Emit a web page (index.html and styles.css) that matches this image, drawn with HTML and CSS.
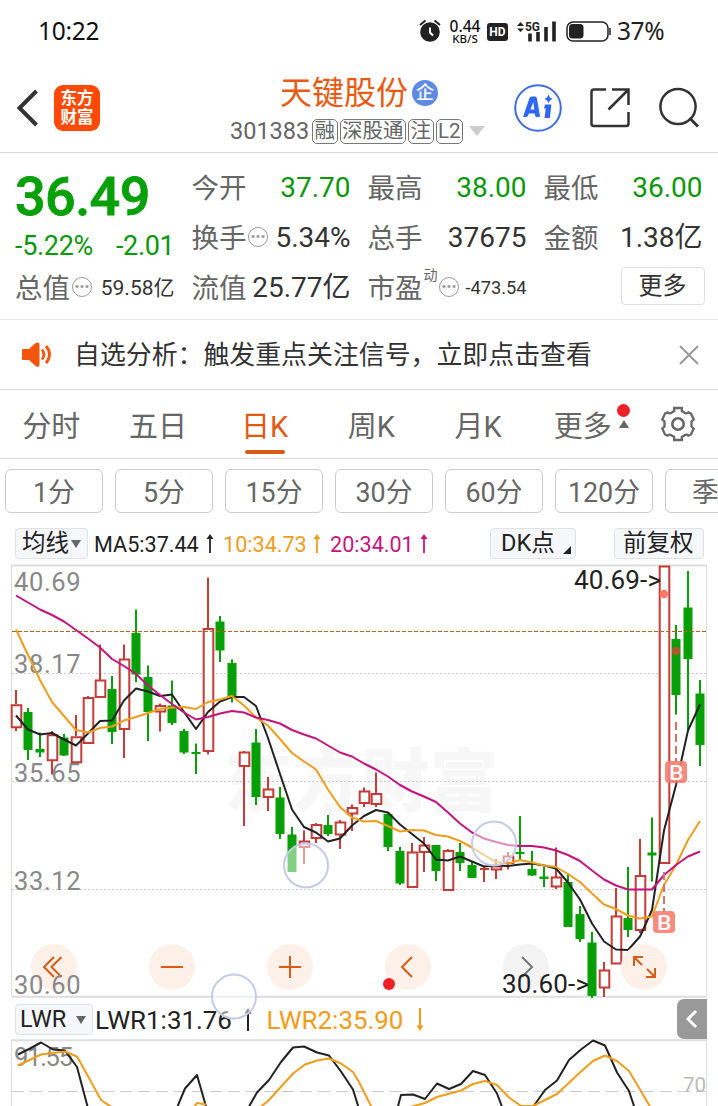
FILE: index.html
```html
<!DOCTYPE html>
<html lang="zh-CN">
<head>
<meta charset="utf-8">
<title>天键股份 301383</title>
<link rel="stylesheet" href="styles.css">
</head>
<body>
<div class="app">
  <div class="status">
    <span class="clock">10:22</span>
    <div class="status-right">
      <svg class="alarm" width="22" height="24" viewBox="0 0 22 24"><circle cx="11" cy="13" r="9.800" fill="#222"/><path d="M1 6 6.500 1.500M15.500 1.500 21 6" stroke="#222" stroke-width="2"/><path d="M11 8.500v5l3 3" fill="none" stroke="#fff" stroke-width="2"/></svg>
      <div class="speed"><b>0.44</b><b class="unit">KB/S</b></div>
      <span class="hd">HD</span>
      <svg class="signal" width="40" height="24" viewBox="0 0 40 24"><path d="M0 6 3.500 2 7 6zM0 8.500h7L3.500 12z" fill="#222"/><text x="8" y="10.500" class="fiveg" textLength="15" lengthAdjust="spacingAndGlyphs">5G</text><path d="M13 13.500v8M21 12v9.500M29 7v14.500M37 1.500v20" stroke="#222" stroke-width="3.600"/></svg>
      <svg class="battery" width="45" height="22" viewBox="0 0 45 22"><rect x="1" y="1" width="41" height="19" rx="6" fill="none" stroke="#222" stroke-width="1.500"/><rect x="3" y="3" width="14.500" height="14.500" rx="3.500" fill="#222"/><path d="M44 7v7" stroke="#222" stroke-width="1.500"/></svg>
      <span class="percent">37%</span>
    </div>
  </div>

  <header class="header">
    <svg class="back" width="24" height="38" viewBox="0 0 24 38"><path d="M21.500 2 4.500 19 21.500 36" fill="none" stroke="#333" stroke-width="4"/></svg>
    <div class="logo"><span>东方</span><span>财富</span></div>
    <div class="title">
      <div class="name"><span>天键股份</span><i class="ent">企</i></div>
      <div class="code"><span class="num">301383</span><i class="tag">融</i><i class="tag">深股通</i><i class="tag">注</i><i class="tag">L2</i><i class="caret"></i></div>
    </div>
    <div class="tools">
      <svg width="48" height="48" viewBox="0 0 48 48"><circle cx="24" cy="24" r="22.800" fill="none" stroke="#3f6be8" stroke-width="2"/><path d="M9 33 15.500 14Q16 12.500 17.500 12.500H21Q22.500 12.500 22.800 14L26 32Q26 33 25 33H22.500Q21.500 33 21.200 32L20.800 29.500H15L13.800 32Q13.300 33 12.300 33ZM16.500 25.500H20.300L19.300 18Z" fill="#2f67f5" fill-rule="evenodd"/><path d="M31 20.500H37Q37.500 20.500 37.300 21.500L35.800 34H30.500L31.700 24.500H30Z" fill="#2f67f5"/><path d="M34.500 10.500 36 13.500 38.500 15 36 16.500 34.500 19 33 16.500 30.500 15 33 13.500z" fill="#2f67f5"/></svg>
      <svg class="share" width="40" height="40" viewBox="0 0 40 40"><path d="M16 1.500H4Q1.500 1.500 1.500 4V36Q1.500 38 4 38H36Q38.500 38 38.500 36V24M22 1.500H38.500V17M38.500 1.500 18.500 21.500" fill="none" stroke="#333" stroke-width="2.500"/></svg>
      <svg class="search" width="42" height="42" viewBox="0 0 42 42"><circle cx="20" cy="19.500" r="17.600" fill="none" stroke="#333" stroke-width="2.500"/><path d="M31.500 31 40 39.500" stroke="#333" stroke-width="3"/></svg>
    </div>
  </header>

  <section class="quote">
    <div class="lead">
      <strong class="price">36.49</strong>
      <div class="change"><span>-5.22%</span><span>-2.01</span></div>
      <div class="cell"><span class="lbl">总值<i class="more-dot"></i></span><span class="val sm">59.58亿</span></div>
    </div>
    <div class="col">
      <div class="cell"><span class="lbl">今开</span><span class="val green">37.70</span></div>
      <div class="cell"><span class="lbl">换手<i class="more-dot"></i></span><span class="val">5.34%</span></div>
      <div class="cell"><span class="lbl">流值</span><span class="val">25.77亿</span></div>
    </div>
    <div class="col">
      <div class="cell"><span class="lbl">最高</span><span class="val green">38.00</span></div>
      <div class="cell"><span class="lbl">总手</span><span class="val">37675</span></div>
      <div class="cell"><span class="lbl">市盈<sup>动</sup><i class="more-dot"></i></span><span class="val xs">-473.54</span></div>
    </div>
    <div class="col">
      <div class="cell"><span class="lbl">最低</span><span class="val green">36.00</span></div>
      <div class="cell"><span class="lbl">金额</span><span class="val">1.38亿</span></div>
      <div class="cell end"><button class="more-btn">更多</button></div>
    </div>
  </section>

  <div class="notice">
    <svg width="32" height="26" viewBox="0 0 32 26"><path d="M1 7H7L13 1.500Q17.500 -1 17.500 3V22Q17.500 27 13 23.500L7 18H1Q0 18 0 17V8Q0 7 1 7Z" fill="#f4550c"/><path d="M20 7.500Q24 12.500 20 17.500M24 4Q31 12.500 24 21" fill="none" stroke="#f4550c" stroke-width="2.800"/></svg>
    <span class="notice-text">自选分析：触发重点关注信号，立即点击查看</span>
    <svg width="20" height="20" viewBox="0 0 20 20"><path d="M1 1 19 19M19 1 1 19" stroke="#999" stroke-width="2"/></svg>
  </div>

  <nav class="tabs">
    <span class="tab">分时</span><span class="tab">五日</span><span class="tab active">日K</span><span class="tab">周K</span><span class="tab">月K</span><span class="tab last">更多<i class="up"></i><i class="badge"></i></span>
    <svg class="gear" width="36" height="36" viewBox="0 0 36 36"><path d="M14.200 5V2H21.800V5L25 7Q27 8 28.500 6.300L31 7.500 33.700 13.500 31.500 15.500V20.500L33.700 22.500 31 28.500 28.500 29.700Q27 28 25 29L21.800 31V34H14.200V31L11 29Q9 28 7.500 29.700L5 28.500 2.300 22.500 4.500 20.500V15.500L2.300 13.500 5 7.500 7.500 6.300Q9 8 11 7Z" fill="none" stroke="#666" stroke-width="2.300"/><circle cx="18" cy="18" r="5.700" fill="none" stroke="#666" stroke-width="2.600"/></svg>
  </nav>

  <div class="periods">
    <span>1分</span><span>5分</span><span>15分</span><span>30分</span><span>60分</span><span>120分</span><span class="season">季</span>
  </div>

  <div class="averages">
    <span class="chip ma">均线<i class="down"></i></span>
    <span class="avg black">MA5:37.44</span><svg class="arr" width="10" height="20" viewBox="0 0 10 20"><path d="M5 2V19" stroke="#222" stroke-width="1.800"/><path d="M1.500 5 5 0 8.500 5z" fill="#222"/></svg>
    <span class="avg orange">10:34.73</span><svg class="arr" width="10" height="20" viewBox="0 0 10 20"><path d="M5 2V19" stroke="#f39c1c" stroke-width="1.800"/><path d="M1.500 5 5 0 8.500 5z" fill="#f39c1c"/></svg>
    <span class="avg pink">20:34.01</span><svg class="arr" width="10" height="20" viewBox="0 0 10 20"><path d="M5 2V19" stroke="#c7157f" stroke-width="1.800"/><path d="M1.500 5 5 0 8.500 5z" fill="#c7157f"/></svg>
    <span class="chip dk">DK点<i class="corner"></i></span>
    <span class="chip adj">前复权</span>
  </div>

  <div class="chart">
    <svg class="plot" width="718" height="436" viewBox="0 564 718 436">
      <text class="mark" x="224" y="806" textLength="274">东方财富</text>
      <path class="grid" d="M12 673.500H706M12 781.500H706M12 889.500H706"/>
      <path class="frame" d="M11.500 565V997M706.500 565V997"/><path class="frame thick" d="M11 565.500H707M11 996.800H707"/>
      <g class="axis">
        <text x="14" y="591" textLength="66.500">40.69</text><text x="14" y="672.500" textLength="66.500">38.17</text><text x="14" y="781.500" textLength="66.500">35.65</text><text x="14" y="890" textLength="66.500">33.12</text>
      </g>
      <path class="g-wick" d="M28 708V760M40 732.500V757M64 734V756M112 676V744M136 609.500V682M148 665.500V741M172 680.500V725M184 729V754M196 743.500V774M220 616V662M232 659.500V702.500M256 729V805M280 787V839M292 827V872M328 815V836M388 813V851M400 847V885M436 845V881M460 843V871M472 861V878M520 816V860M532 851V876M544 867V887M568 873V927M580 906V942M592 932V998M628 867V937M652 817.500V881.500M676 625V714.500M688 571V730M700 680V766"/>
      <path class="g-body" d="M28 712V750M40 749V752.500M64 737.500V755.500M112 689V732M136 633V674.500M148 677V712M172 705.500V723M184 731V752.500M196 752V754M220 621.500V650.500M232 663V697M256 742.500V797M280 797.500V834M292 834.500V872M328 825V834M388 814V847M400 851V883.500M436 845V871M460 852V863M472 865V878M520 852V854M532 869V875.500M544 876.500V879M568 882V927M580 914V939M592 942.500V996M628 918V930M652 852.500V855.500M676 639V695M688 607.500V659M700 693.500V745"/>
      <path class="r-wick" d="M16 690V704M16 728V731M52 731V735M52 760V774.500M76 715V736M88 696V698M100 644.500V680M124 644.500V659M124 729V758M160 703.500V705M160 712V731.500M208 577.500V628M208 752V754.500M244 751V753M244 766V826M268 777V789M268 797V811M304 830.500V841M304 847V864M316 823V825M316 838V843M340 820V822M340 834V849M352 804.500V808M352 814V831M364 787.500V791M364 803V807M376 772.500V794M376 804V807M412 843V852M424 837V845M424 852V872M448 849V851M484 866V882M496 859V866M496 869V879M508 852V856M508 863V869.500M556 847.500V877M556 887V889M604 962V970M604 987V997M616 888V916M640 839V876M640 930V933"/>
      <path class="r-body" d="M11.700 705.200h9.600v22h-9.600zM47.700 735.200h9.600v25h-9.600zM71.700 737.200h9.600v25h-9.600zM83.700 698h9.600v45h-9.600zM95.700 680.500h9.600v16.500h-9.600zM119.700 659.500h9.600v69.500h-9.600zM155.700 706h9.600v5.500h-9.600zM203.700 629h9.600v122h-9.600zM239.700 752.500h9.600v13.500h-9.600zM263.700 789.500h9.600v7.500h-9.600zM299.700 841.500h9.600v5.500h-9.600zM311.700 825h9.600v13h-9.600zM335.700 822.500h9.600v12h-9.600zM347.700 808h9.600v5.500h-9.600zM359.700 791.500h9.600v11.500h-9.600zM371.700 794h9.600v10h-9.600zM407.700 852.500h9.600v34.500h-9.600zM419.700 845.500h9.600v6.500h-9.600zM443.700 851h9.600v39h-9.600zM480 869h9M491.700 866.500h9.600v3h-9.600zM503.700 856.500h9.600v6.500h-9.600zM551.700 877.500h9.600v9h-9.600zM599.700 970.500h9.600v17h-9.600zM611.700 916.500h9.600v47h-9.600zM635.700 876h9.600v54h-9.600zM659.700 566.500h9.600v296.500h-9.600z"/>
      <path class="limit" d="M12 631.500H706"/>
      <path class="line black" d="M16 715.500 28 729.500 40 734.500 52 733 64 739.500 76 745.500 88 733.500 100 721 112 720.500 124 700.500 136 688.500 148 691.500 160 696 172 694.500 184 712 196 729 208 712 220 701.500 232 697H244L256 706 268 738 280 774 292 809.500 304 827 316 832.500 328 841.500 340 838.500 352 825.500 364 816 376 810 388 812.500 400 824.500 412 834 424 843.500 436 859.500 448 860.500 460 856.500 472 861.500 484 866.500 496 865.500 508 866 520 864.500 532 863.500 544 865.500 556 868.500 568 882.500 580 899.500 592 923.500 604 941.500 616 949.500 628 950 640 936.500 652 910 664 830.500 676 785 688 730.500 700 704.500"/>
      <path class="line orange" d="M16 629.500 28 655 40 680 52 702 64 716 76 730 88 732.500 100 728 112 726.500 124 720.500 136 717 148 713 160 709 172 707.500 184 707 196 709 208 702 220 699.500 232 696 244 705.500 256 717.500 268 725.500 280 739 292 753 304 761.500 316 769.500 328 789.500 340 807 352 817.500 364 821.500 376 821 388 826 400 831.500 412 830 424 830.500 436 835 448 836.500 460 841 472 847.500 484 855 496 862 508 863.500 520 860 532 862.500 544 865.500 556 867 568 874 580 882 592 893.500 604 904.500 616 909 628 915.500 640 918.500 652 916.500 664 885 676 865 688 840 700 821"/>
      <path class="line pink" d="M16 595.500 28 602.500 40 609.500 52 615 64 621.500 76 630 88 638.500 100 647.500 112 659 124 666 136 674 148 685.500 160 695 172 704 184 712.500 196 719.500 208 717 220 713.500 232 711 244 712.500 256 717.500 268 720 280 723.500 292 730 304 734.500 316 738.500 328 745.500 340 752.500 352 756.500 364 763.500 376 769.500 388 776.500 400 785 412 791.500 424 796.500 436 802 448 812.500 460 823.500 472 832.500 484 838.500 496 842 508 845 520 846H532L544 847.500 556 850.500 568 855 580 861 592 870.500 604 879.500 616 885.500 628 889.500H652L664 875 676 865 688 856.500 700 851.500"/>
      <path class="signal-line" d="M676 722V762M664 872V912"/>
      <circle cx="664" cy="594" r="4.200" fill="#ff7868"/><circle cx="676" cy="651" r="4.200" fill="#b0562a"/>
      <g class="buy"><rect x="665" y="761" width="22" height="22" rx="4"/><text x="669" y="779.500" textLength="14.500" lengthAdjust="spacingAndGlyphs">B</text><rect x="653" y="911" width="22" height="22" rx="4"/><text x="657" y="929.500" textLength="14.500" lengthAdjust="spacingAndGlyphs">B</text></g>
      <g class="extreme"><text x="574" y="589" textLength="87">40.69-&gt;</text></g>
      <g class="round">
        <circle cx="54" cy="967" r="23"/><circle cx="172" cy="967" r="23"/><circle cx="290" cy="967" r="23"/><circle cx="408" cy="967" r="23"/><circle cx="526" cy="967" r="23" class="off"/><circle cx="644" cy="967" r="23"/>
        <path d="M54 957 44 967 54 977M61.500 957 51.500 967 61.500 977M161 967H183M279 967H301M290 956V978M412 957 402 967 412 977M634 966V957H643M634 957 642 965M646 977H655V968M655 977 647 969"/>
        <path class="off-line" d="M522 957 532 967 522 977"/>
      </g>
      <text class="axis-over" x="14" y="994" textLength="66.500">30.60</text>
      <g class="extreme"><text x="502" y="993" textLength="87">30.60-&gt;</text></g>
      <circle cx="389" cy="984" r="6" fill="#ef2026"/>
    </svg>
    <svg class="bubbles" width="718" height="200" viewBox="0 820 718 200"><g><circle cx="306" cy="865.500" r="22"/><circle cx="494" cy="843.500" r="22"/><circle cx="234" cy="996.500" r="22"/></g></svg>
  </div>

  <div class="lwr-row">
    <span class="chip lwr">LWR<i class="down"></i></span>
    <span class="ind black">LWR1:31.76</span><svg class="arr" width="10" height="23" viewBox="0 0 10 23"><path d="M5 2V23" stroke="#222" stroke-width="2"/><path d="M1.500 5.500 5 0 8.500 5.500z" fill="#222"/></svg>
    <span class="ind orange">LWR2:35.90</span><svg class="arr" width="10" height="23" viewBox="0 0 10 23"><path d="M5 0V20" stroke="#f39c1c" stroke-width="2"/><path d="M1.500 17.500 5 23 8.500 17.500z" fill="#f39c1c"/></svg>
    <span class="side"><svg width="12" height="20" viewBox="0 0 12 20"><path d="M10 2 2 10 10 18" fill="none" stroke="#fff" stroke-width="3"/></svg></span>
  </div>

  <svg class="sub" width="718" height="67" viewBox="0 1039 718 67">
    <path class="frame" d="M11.500 1040V1106M706.500 1040V1106"/><path class="frame thick" d="M11 1040.200H707"/>
    <path class="dash" d="M12 1091.500H706"/>
    <text class="axis-over" x="14" y="1065.500" textLength="59">91.55</text>
    <text class="seventy" x="683" y="1092">70</text>
    <path class="line black" d="M18 1054.500 30 1048.500 41 1042.500 53 1049.500 65 1050.500 77 1067 89 1112M176 1110 185 1088.500 197 1075 207 1110M247 1110 257 1092.500 269 1080 281 1062 293 1047.500 304 1046.500 317 1052.500 329 1055.500 341 1071.500 353 1089.500 360 1112M397 1110 401 1095 413 1094.500 425 1099 437 1083.500 449 1089 461 1084 473 1071 485 1075 497 1093.500 504 1112M531 1110 545 1090 557 1080.500 569 1060 581 1049.500 593 1040.500 605 1045.500 617 1072.500 629 1091 636 1112"/>
    <path class="line orange" d="M18 1065.500 41 1054.500 65 1051.500 77 1056.500 89 1078 101 1100 116 1110M192 1110 197 1103 206 1104.500M258 1109 269 1100 293 1073.500 305 1064.500 317 1060.500 329 1058.500 341 1063.500 353 1072 359 1082 373 1110M410 1107 425 1103 437 1097 461 1090.500 473 1084 485 1081 497 1085 509 1097.500 521 1106H533L557 1094 581 1071.500 593 1061 605 1055.500 617 1061 629 1071 652 1110"/>
  </svg>
</div>
</body>
</html>
```
FILE: styles.css
```css
* { box-sizing: border-box; }
body { margin: 0; background: #fff; color: #333; font-family: Roboto, "Noto Sans CJK SC", sans-serif; }
i { font-style: normal; }
svg { display: block; flex: none; }
.app { width: 718px; height: 1106px; overflow: hidden; display: flex; flex-direction: column; white-space: nowrap; }
.app > * { flex: none; }

.status { height: 64px; padding: 0 54px 0 38px; display: flex; justify-content: space-between; align-items: center; font-family: "Noto Sans", sans-serif; color: #111; }
.clock { font-size: 24.5px; letter-spacing: -.3px; line-height: 30px; margin-top: -2px; }
.status-right { display: flex; align-items: center; }
.alarm { margin: -2px 7px 0 0; }
.speed { width: 34px; display: flex; flex-direction: column; align-items: center; font-size: 15.500px; line-height: 13px; }
.speed b { font-weight: 500; }
.speed .unit { font-size: 11.500px; line-height: 12px; }
.hd { margin-left: 5px; width: 21px; height: 18px; border-radius: 3px; background: #222; color: #fff; font: bold 12px/18px Roboto, sans-serif; text-align: center; }
.signal { margin: 0 9px 0 9px; }
.fiveg { font: bold 12.500px Roboto, sans-serif; fill: #222; }
.percent { width: 47px; margin-left: 6px; font-size: 24.500px; letter-spacing: -.4px; line-height: 30px; margin-top: -2px; color: #222; }

.header { height: 89px; border-bottom: 1px solid #d9d9d9; display: flex; align-items: flex-start; padding: 12px 15px 0 15px; }
.back { margin-top: 13px; }
.logo { margin: 9px 0 0 15px; width: 46px; height: 46px; border-radius: 9px; background: #ff4a05; color: #fff; display: flex; flex-direction: column; align-items: center; justify-content: center; font-size: 16.500px; line-height: 19px; font-weight: 700; }
.title { margin-left: 130px; width: 257px; }
.name { height: 34px; padding-left: 50px; display: flex; align-items: center; font-size: 32px; line-height: 34px; color: #e85a12; }
.ent { width: 26px; height: 26px; border-radius: 13px; margin-left: 4px; background: #5e8ae6; color: #fff; font-size: 18px; line-height: 25px; text-align: center; font-weight: 500; }
.code { margin-top: 8px; height: 26px; display: flex; align-items: center; color: #666; font-size: 22px; }
.num { width: 82px; font-size: 23.500px; }
.tag { height: 25px; padding: 0 1.500px; margin-right: 2px; border: 1px solid #777; border-radius: 5px; font-size: 20.500px; line-height: 22px; }
.caret { border: 8px solid transparent; border-top: 10px solid #ccc; border-bottom: 0; margin-left: 4px; }
.tools { display: flex; align-items: center; height: 64px; margin-left: 27px; }
.share { margin-left: 28px; }
.search { margin-left: 28px; }

.quote { height: 167px; padding: 10px 15px 0 15px; display: grid; grid-template-columns: 159.500px 159px 159px 159px; column-gap: 17px; border-bottom: 1px solid #e8e8e8; }
.lead, .col { display: flex; flex-direction: column; }
.cell { height: 50px; display: flex; align-items: center; justify-content: space-between; }
.lbl { display: flex; align-items: center; height: 48px; font-size: 27.500px; line-height: 49px; color: #666; }
.val { font-size: 28px; line-height: 50px; height: 50px; color: #333; }
.val.green, .price, .change { color: #0b980b; }
.val.sm { font-size: 21px; }
.val.xs { font-size: 18.200px; }
.price { height: 66px; font-size: 54px; line-height: 68px; font-weight: 500; letter-spacing: -.6px; color: #08a008; -webkit-text-stroke: .8px #08a008; }
.change { height: 34px; display: flex; justify-content: space-between; font-size: 27px; line-height: 34px; letter-spacing: -.3px; }
.lbl sup { font-size: 14px; line-height: 14px; align-self: flex-start; margin-top: 4px; margin-left: 1px; vertical-align: baseline; }
.more-dot { width: 20px; height: 20px; border: 1.500px solid #999; border-radius: 50%; margin: -3px 0 0 1.500px; background: radial-gradient(circle, #999 1.300px, transparent 1.600px) 50% 50% / 5px 17px repeat-x; background-clip: content-box; padding: 0 1px; }
.end { justify-content: flex-end; }
.more-btn { width: 84px; height: 38px; margin: -4px -2px 0 0; border: 1px solid #ddd; border-radius: 4px; background: #fff; color: #333; font: 24px/34px Roboto, "Noto Sans CJK SC", sans-serif; }

.notice { height: 70px; padding: 0 19px 0 22px; border-bottom: 1px solid #d9d9d9; display: flex; align-items: center; }
.notice-text { flex: 1; margin-left: 20px; font-size: 25.900px; line-height: 40px; }

.tabs { height: 69px; border-bottom: 1px solid #d9d9d9; display: flex; }
.tab { position: relative; width: 106.700px; text-align: center; font-size: 29px; line-height: 74px; height: 68px; color: #666; left: -2px; }
.tab.last { padding-right: 4px; }
.tab.active { color: #e05a12; }
.tab.active::after { content: ""; position: absolute; left: 34px; bottom: 4px; width: 40px; height: 4px; border-radius: 2px; background: #d95c14; }
.up { position: absolute; left: 87.500px; top: 30px; border: 5px solid transparent; border-bottom: 8px solid #666; border-top: 0; }
.badge { position: absolute; left: 85.500px; top: 14px; width: 13px; height: 13px; border-radius: 50%; background: #ef2026; }
.gear { margin: 16px 0 0 20px; }

.periods { height: 64px; padding: 10px 0 0 5px; display: flex; gap: 12px; overflow: hidden; }
.periods span { flex: none; width: 98px; height: 44px; border: 1px solid #ccc; border-radius: 6px; text-align: center; font-size: 26.800px; line-height: 47px; color: #666; }
.periods .season { text-align: left; padding-left: 26px; }

.averages { height: 42px; padding: 5px 14px 0 15px; display: flex; align-items: flex-start; }
.chip { height: 31px; border: 1px solid #dfe1e5; border-radius: 4px; background: #f6f7fa; color: #222; font-size: 23.500px; line-height: 29px; display: flex; align-items: center; }
.ma { width: 73px; padding-left: 6px; }
.down { border: 5px solid transparent; border-top: 8px solid #666; border-bottom: 0; margin-left: 2px; }
.avg { font-size: 21.600px; line-height: 33px; }
.avg.black { margin-left: 6px; width: 111px; }
.avg.orange { margin-left: 8px; width: 89px; }
.avg.pink { margin-left: 8px; width: 89px; }
.averages .arr { margin-top: 6px; }
span.black { color: #222; }
span.orange { color: #f39c1c; }
span.pink { color: #c7157f; }
.dk { margin-left: auto; width: 86px; padding-left: 10px; position: relative; }
.corner { position: absolute; right: 4px; bottom: 4px; border-left: 8px solid transparent; border-bottom: 8px solid #222; }
.adj { width: 90px; margin-left: 38px; padding-left: 8px; }

.chart { position: relative; height: 432px; }
.plot { margin-top: -1px; }
.bubbles { position: absolute; left: 0; top: 255px; z-index: 2; }
.bubbles circle { fill: rgba(255,255,255,.5); stroke: #c5cae8; stroke-width: 2; }
.mark { font: 900 68px "Noto Sans CJK SC", sans-serif; fill: #f7f7f7; }
.grid { stroke: #ccc; stroke-width: 1; stroke-dasharray: 2 2; }
.frame { stroke: #ddd; stroke-width: 1; fill: none; }
.thick { stroke-width: 2; }
.axis text, .axis-over { font-size: 25.500px; fill: #888; }
.extreme text { font-size: 26px; fill: #222; }
.g-wick { stroke: #06a006; stroke-width: 2; }
.g-body { stroke: #06a006; stroke-width: 9; }
.r-wick { stroke: #c43b37; stroke-width: 2; }
.r-body { stroke: #c43b37; stroke-width: 2; fill: #fff; }
.limit { stroke: #b8601c; stroke-width: 1; stroke-dasharray: 4 2; }
.line { fill: none; stroke-width: 2; stroke-linejoin: round; }
.line.black { stroke: #222; }
.line.orange { stroke: #f09c1c; }
.line.pink { stroke: #c4157f; }
.signal-line { stroke: #d2756b; stroke-width: 2; stroke-dasharray: 8 4; }
.buy rect { fill: #f97d70; fill-opacity: .9; }
.buy text { font: 500 20px Roboto, sans-serif; fill: #fff; }
.round circle { fill: #fdeee5; fill-opacity: .9; }
.round .off { fill: #f2f2f2; }
.round path { fill: none; stroke: #d95c14; stroke-width: 2; }
.round .off-line { stroke: #777; }

.lwr-row { height: 42px; padding: 7px 11px 0 15px; display: flex; align-items: flex-start; }
.lwr { width: 78px; padding-left: 4px; font-size: 23.500px; }
.lwr .down { margin-left: 10px; }
.ind { font-size: 25.900px; line-height: 32px; }
.ind.black { margin-left: 2px; width: 148px; }
.ind.orange { margin-left: 13.500px; width: 148px; }
.lwr-row .arr { margin-top: 4px; }
.side { margin: -5px 0 0 auto; width: 30px; height: 40px; border-radius: 7px 0 0 7px; background: #999; display: flex; align-items: center; justify-content: center; }
.dash { stroke: #ccc; stroke-dasharray: 12 6; }
.seventy { font-size: 20.500px; fill: #bbb; }
```
